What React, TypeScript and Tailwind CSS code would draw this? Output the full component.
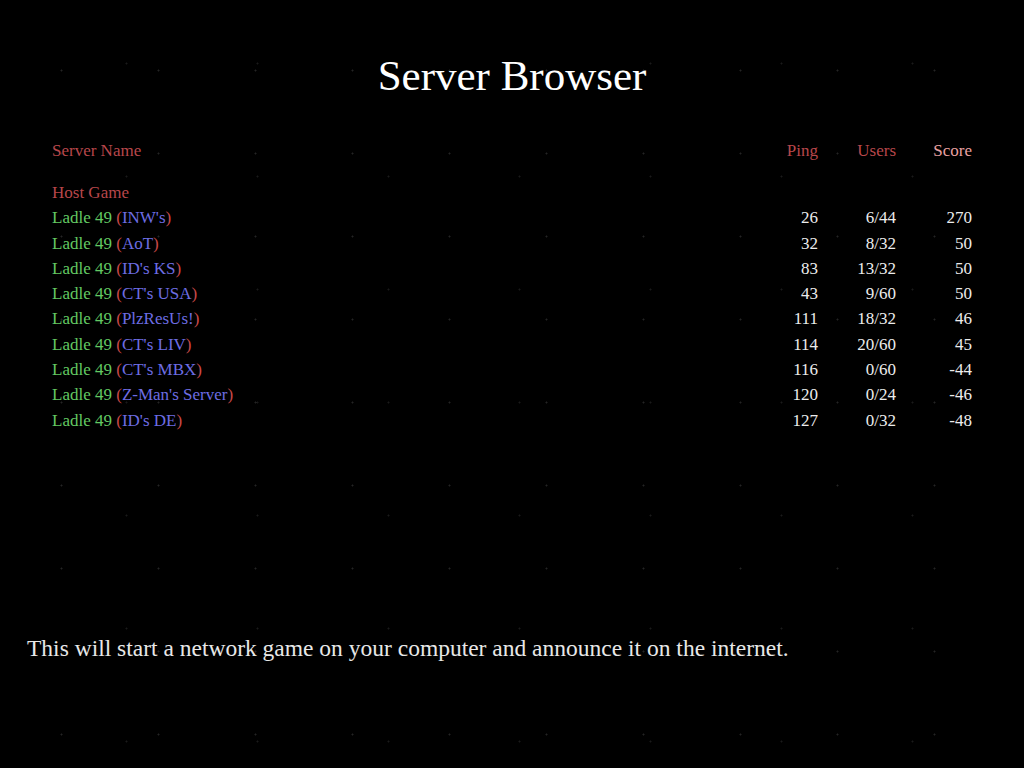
const servers = [
  { name: "INW's", ping: 26, users: "6/44", score: 270 },
  { name: "AoT", ping: 32, users: "8/32", score: 50 },
  { name: "ID's KS", ping: 83, users: "13/32", score: 50 },
  { name: "CT's USA", ping: 43, users: "9/60", score: 50 },
  { name: "PlzResUs!", ping: 111, users: "18/32", score: 46 },
  { name: "CT's LIV", ping: 114, users: "20/60", score: 45 },
  { name: "CT's MBX", ping: 116, users: "0/60", score: -44 },
  { name: "Z-Man's Server", ping: 120, users: "0/24", score: -46 },
  { name: "ID's DE", ping: 127, users: "0/32", score: -48 },
];

export default function App() {
  return (
    <div
      className="h-[768px] w-full bg-black text-white flex flex-col bg-[radial-gradient(circle,rgba(255,255,255,0.14)_0.8px,transparent_1.2px),radial-gradient(circle,rgba(255,255,255,0.1)_0.8px,transparent_1.2px)] bg-[length:97px_83px,131px_113px] bg-[position:13px_29px,61px_7px]"
      style={{ fontFamily: '"Liberation Serif", "DejaVu Serif", serif' }}
    >
      <h1 className="pt-[51px] text-center text-[43px] leading-[50px] text-white">
        Server Browser
      </h1>

      <div className="mt-[37px] px-[52px] text-[17px]">
        <div className="grid grid-cols-[1fr_80px_78px_76px] leading-[26px] text-[#b8474b]">
          <div>Server Name</div>
          <div className="text-right">Ping</div>
          <div className="text-right">Users</div>
          <div className="text-right text-[#eaa2a2]">Score</div>
        </div>

        <div className="mt-[16px] leading-[25.3px] text-[#b8474b]">Host Game</div>

        {servers.map((s) => (
          <div
            key={s.name}
            className="grid grid-cols-[1fr_80px_78px_76px] leading-[25.3px]"
          >
            <div>
              <span className="text-[#63c963]">Ladle 49 </span>
              <span className="text-[#c84848]">(</span>
              <span className="text-[#6d6de3]">{s.name}</span>
              <span className="text-[#c84848]">)</span>
            </div>
            <div className="text-right text-[#ececec]">{s.ping}</div>
            <div className="text-right text-[#ececec]">{s.users}</div>
            <div className="text-right text-[#ececec]">{s.score}</div>
          </div>
        ))}
      </div>

      <p className="mt-auto pb-[107px] pl-[27px] text-[23.5px] leading-[26px] text-[#e8e8e8]">
        This will start a network game on your computer and announce it on the internet.
      </p>
    </div>
  );
}
